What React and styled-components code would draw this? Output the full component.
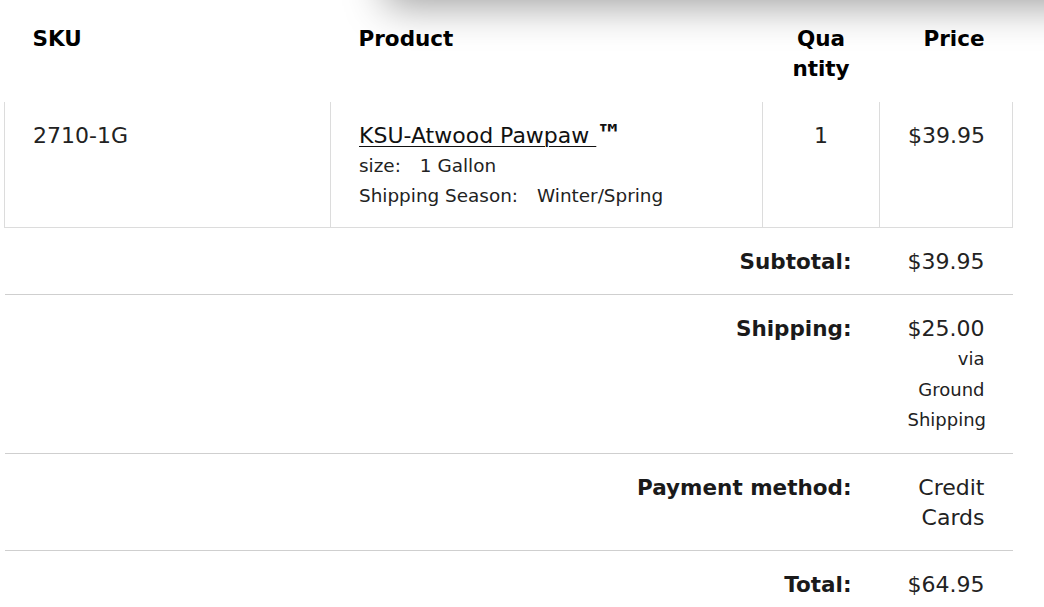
import React from "react";
import styled, { createGlobalStyle } from "styled-components";

const Global = createGlobalStyle`
  html, body { margin: 0; padding: 0; background: #fff; }
  body { font-family: "DejaVu Sans", Verdana, sans-serif; color: #222; overflow: hidden; }
`;

const Page = styled.div`
  position: relative;
  width: 1044px;
  height: 607px;
  overflow: hidden;
  padding: 6px 0 0 4px;
  box-sizing: border-box;
`;

const TopShadow = styled.div`
  position: absolute;
  top: -60px;
  left: 385px;
  right: -60px;
  height: 60px;
  background: #fff;
  box-shadow: 0 6px 40px rgba(0, 0, 0, 0.38);
`;

const Table = styled.table`
  width: 1008px;
  table-layout: fixed;
  border-collapse: collapse;
  font-size: 22px;
  line-height: 30px;
`;

const HeadCell = styled.th`
  padding: 18px 28px;
  font-weight: bold;
  font-size: 21.5px;
  color: #000;
  vertical-align: top;
  text-align: ${(p) => p.$align || "left"};
  word-break: break-all;
`;

const ItemCell = styled.td`
  padding: 19px 28px 16px;
  vertical-align: top;
  text-align: ${(p) => p.$align || "left"};
  border-left: 1px solid #dcdcdc;
  border-right: 1px solid #dcdcdc;
  border-bottom: 1px solid #dcdcdc;
`;

const ProductLine = styled.div`
  height: 30px;
  white-space: nowrap;
`;

const ProductLink = styled.a`
  color: #111;
  text-decoration: underline;
  text-underline-offset: 3px;
  text-decoration-thickness: 1px;
`;

const Trade = styled.span`
  font-weight: bold;
  font-size: 26px;
  line-height: 1;
  color: #111;
`;

const Meta = styled.div`
  font-size: 18.4px;
  line-height: 30px;
  color: #222;
`;

const MetaKey = styled.span`
  margin-right: 19px;
`;

const TotalLabel = styled.th`
  padding: 19px 28px 17px;
  font-weight: bold;
  font-size: 21.5px;
  color: #1a1a1a;
  text-align: right;
  vertical-align: top;
  border-top: 1px solid #cfcfcf;
`;

const TotalValue = styled.td`
  padding: 19px 28px 17px;
  text-align: right;
  vertical-align: top;
  border-top: 1px solid #cfcfcf;
`;

const Small = styled.div`
  font-size: 18px;
  line-height: 30.5px;
  white-space: nowrap;
`;

const totals = [
  { label: "Subtotal:", value: "$39.95" },
  { label: "Shipping:", value: "$25.00", extra: ["via", "Ground", "Shipping"] },
  { label: "Payment method:", value: "Credit Cards" },
  { label: "Total:", value: "$64.95" },
];

export default function App() {
  return (
    <>
      <Global />
      <Page>
        <TopShadow />
        <Table>
          <colgroup>
            <col style={{ width: 326 }} />
            <col style={{ width: 432 }} />
            <col style={{ width: 117 }} />
            <col style={{ width: 133 }} />
          </colgroup>
          <thead>
            <tr>
              <HeadCell>SKU</HeadCell>
              <HeadCell>Product</HeadCell>
              <HeadCell $align="center">Quantity</HeadCell>
              <HeadCell $align="right">Price</HeadCell>
            </tr>
          </thead>
          <tbody>
            <tr>
              <ItemCell>2710-1G</ItemCell>
              <ItemCell>
                <ProductLine>
                  <ProductLink href="#">KSU-Atwood Pawpaw </ProductLink>
                  <Trade>™</Trade>
                </ProductLine>
                <Meta>
                  <MetaKey>size:</MetaKey>1 Gallon
                </Meta>
                <Meta>
                  <MetaKey>Shipping Season:</MetaKey>Winter/Spring
                </Meta>
              </ItemCell>
              <ItemCell $align="center">1</ItemCell>
              <ItemCell $align="right">$39.95</ItemCell>
            </tr>
            {totals.map((t) => (
              <tr key={t.label}>
                <TotalLabel colSpan={3}>{t.label}</TotalLabel>
                <TotalValue>
                  {t.value}
                  {t.extra && t.extra.map((e) => <Small key={e}>{e}</Small>)}
                </TotalValue>
              </tr>
            ))}
          </tbody>
        </Table>
      </Page>
    </>
  );
}
